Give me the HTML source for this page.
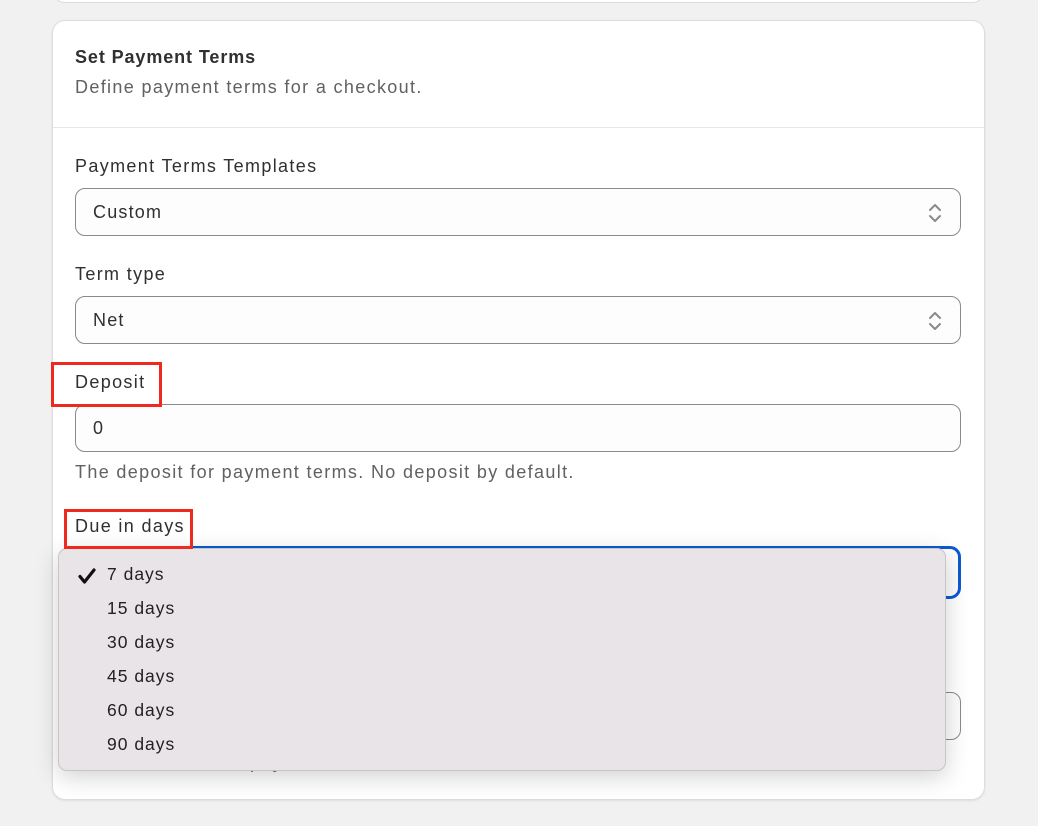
<!DOCTYPE html>
<html><head><style>
*{box-sizing:border-box;margin:0;padding:0}
body{width:1038px;height:826px;background:#f1f1f1;font-family:"Liberation Sans",sans-serif;color:#303030;position:relative;overflow:hidden}
.abs{position:absolute}
.card{left:52px;top:20px;width:933px;height:780px;background:#fff;border-radius:13px;border:1px solid #ddd;box-shadow:0 1px 2px rgba(0,0,0,.08)}
.topcard{left:52px;top:-20px;width:933px;height:23px;background:#fff;border-radius:0 0 13px 13px;border:1px solid #ddd}
.t{font-size:18px;white-space:nowrap;letter-spacing:1.35px}
.inp{left:75px;width:886px;height:48px;border:1px solid #8a8a8a;border-radius:10px;background:#fdfdfd}
.inp span{position:absolute;left:17px;top:13px;font-size:18px;letter-spacing:1.2px}
.chev{position:absolute;right:18px;top:14px}
.red{border:3px solid #ee2a1e;z-index:5}
.dd{left:58px;top:548px;width:888px;height:223px;background:#e8e4e8;border-radius:9px;border:1px solid #c8c4c8;box-shadow:0 6px 24px rgba(0,0,0,.18);z-index:4}
.opt{position:absolute;left:48px;font-size:17.5px;color:#222;letter-spacing:1px}
</style></head><body>
<div class="abs topcard"></div>
<div class="abs card"></div>
<div class="abs t" style="left:75px;top:47px;font-weight:bold;letter-spacing:0.9px">Set Payment Terms</div>
<div class="abs t" style="left:75px;top:77px;color:#616161">Define payment terms for a checkout.</div>
<div class="abs" style="left:53px;top:127px;width:931px;height:1px;background:#e6e6e6"></div>

<div class="abs t" style="left:75px;top:156px">Payment Terms Templates</div>
<div class="abs inp" style="top:188px"><span>Custom</span>
<svg class="chev" width="14" height="20" viewBox="0 0 14 20"><path d="M2 7l5-5 5 5M2 13l5 5 5-5" fill="none" stroke="#8a8a8a" stroke-width="2" stroke-linecap="round" stroke-linejoin="round"/></svg></div>

<div class="abs t" style="left:75px;top:264px">Term type</div>
<div class="abs inp" style="top:296px"><span>Net</span>
<svg class="chev" width="14" height="20" viewBox="0 0 14 20"><path d="M2 7l5-5 5 5M2 13l5 5 5-5" fill="none" stroke="#8a8a8a" stroke-width="2" stroke-linecap="round" stroke-linejoin="round"/></svg></div>

<div class="abs t" style="left:75px;top:372px">Deposit</div>
<div class="abs red" style="left:51px;top:362px;width:111px;height:45px"></div>
<div class="abs inp" style="top:404px"><span>0</span></div>
<div class="abs t" style="left:75px;top:462px;color:#616161">The deposit for payment terms. No deposit by default.</div>

<div class="abs t" style="left:75px;top:516px">Due in days</div>
<div class="abs red" style="left:64px;top:509px;width:129px;height:40px"></div>
<div class="abs inp" style="top:546px;height:53px;border:3px solid #0a5bd0;border-radius:11px"></div>
<div class="abs inp" style="top:692px"></div>
<div class="abs t" style="left:250px;top:752px;color:#616161">pay</div>

<div class="abs dd">
<svg class="abs" style="left:18px;top:18px" width="20" height="18" viewBox="0 0 20 18"><path d="M3 9.5l4.5 5.5L17 3" fill="none" stroke="#111" stroke-width="3.2" stroke-linecap="round" stroke-linejoin="round"/></svg>
<div class="opt" style="top:15px">7 days</div>
<div class="opt" style="top:49px">15 days</div>
<div class="opt" style="top:83px">30 days</div>
<div class="opt" style="top:117px">45 days</div>
<div class="opt" style="top:151px">60 days</div>
<div class="opt" style="top:185px">90 days</div>
</div>
</body></html>
